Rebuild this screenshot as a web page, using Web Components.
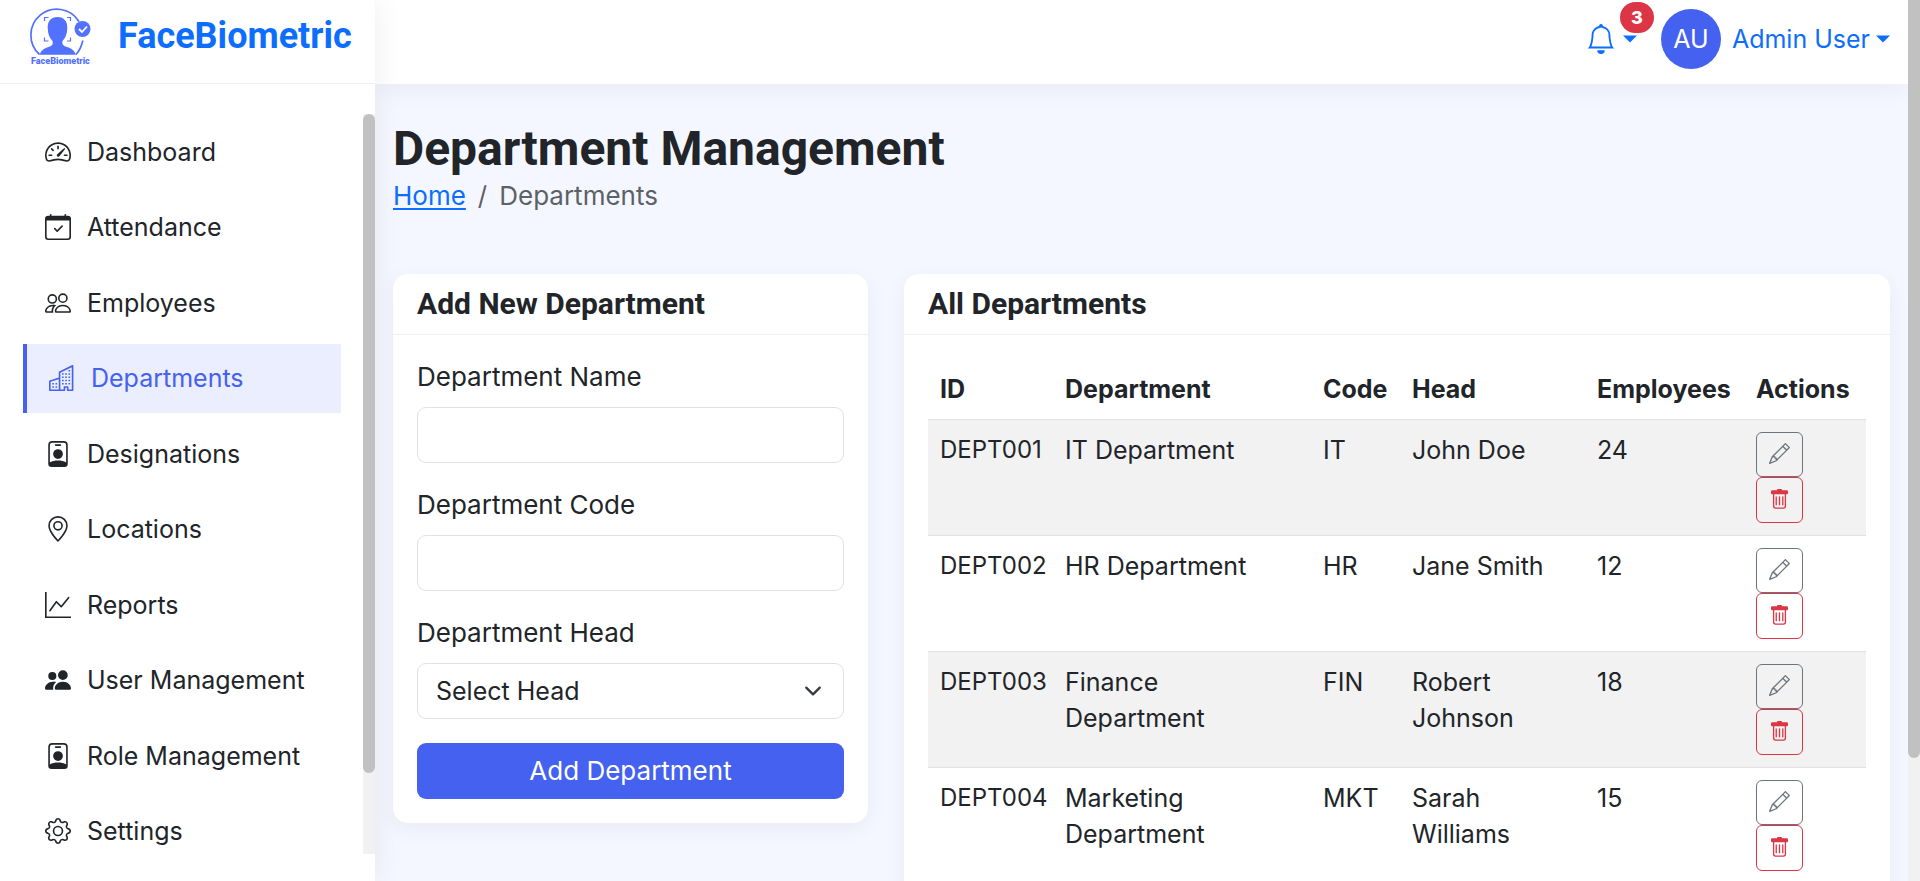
<!DOCTYPE html>
<html lang="en">
<head>
<meta charset="utf-8">
<meta name="viewport" content="width=device-width, initial-scale=1">
<title>FaceBiometric - Department Management</title>
<style>
  body {
    margin: 0;
    background: #f4f7ff;
    color: #212529;
    font: 400 25px/36px Inter, "Open Sans", sans-serif;
    --accent: #4461f0;
    --link: #0d6efd;
    --line: #f0f0f1;
    --heading: Roboto, "Open Sans", sans-serif;
  }
</style>
</head>
<body>
<fb-shell>
  <fb-sidebar slot="sidebar">
    <fb-nav-item icon="speedometer">Dashboard</fb-nav-item>
    <fb-nav-item icon="calendar">Attendance</fb-nav-item>
    <fb-nav-item icon="people">Employees</fb-nav-item>
    <fb-nav-item icon="buildings" active>Departments</fb-nav-item>
    <fb-nav-item icon="badge">Designations</fb-nav-item>
    <fb-nav-item icon="pin">Locations</fb-nav-item>
    <fb-nav-item icon="graph">Reports</fb-nav-item>
    <fb-nav-item icon="peopleFill">User Management</fb-nav-item>
    <fb-nav-item icon="badge">Role Management</fb-nav-item>
    <fb-nav-item icon="gear">Settings</fb-nav-item>
  </fb-sidebar>
  <fb-topbar slot="topbar"></fb-topbar>
  <fb-page-title current="Departments">Department Management</fb-page-title>
  <fb-columns>
    <fb-card heading="Add New Department"><fb-department-form></fb-department-form></fb-card>
    <fb-card heading="All Departments"><fb-department-table></fb-department-table></fb-card>
  </fb-columns>
</fb-shell>

<script>
const ICONS = {
  speedometer: '<path d="M8 4a.5.5 0 0 1 .5.5V6a.5.5 0 0 1-1 0V4.5A.5.5 0 0 1 8 4M3.732 5.732a.5.5 0 0 1 .707 0l.915.914a.5.5 0 1 1-.708.708l-.914-.915a.5.5 0 0 1 0-.707M2 10a.5.5 0 0 1 .5-.5h1.586a.5.5 0 0 1 0 1H2.5A.5.5 0 0 1 2 10m9.5 0a.5.5 0 0 1 .5-.5h1.5a.5.5 0 0 1 0 1H12a.5.5 0 0 1-.5-.5m.754-4.246a.39.39 0 0 0-.527-.02L7.547 9.31a.91.91 0 1 0 1.302 1.258l3.434-4.297a.39.39 0 0 0-.029-.518z"/><path fill-rule="evenodd" d="M0 10a8 8 0 1 1 15.547 2.661c-.442 1.253-1.845 1.602-2.932 1.25C11.309 13.488 9.475 13 8 13c-1.474 0-3.31.488-4.615.911-1.087.352-2.49.003-2.932-1.25A8 8 0 0 1 0 10m8-7a7 7 0 0 0-6.603 9.329c.203.575.923.876 1.68.63C4.397 12.533 6.358 12 8 12s3.604.532 4.923.96c.757.245 1.477-.056 1.68-.631A7 7 0 0 0 8 3"/>',
  calendar: '<path d="M10.854 7.146a.5.5 0 0 1 0 .708l-3 3a.5.5 0 0 1-.708 0l-1.5-1.5a.5.5 0 1 1 .708-.708L7.5 9.793l2.646-2.647a.5.5 0 0 1 .708 0"/><path d="M3.5 0a.5.5 0 0 1 .5.5V1h8V.5a.5.5 0 0 1 1 0V1h1a2 2 0 0 1 2 2v11a2 2 0 0 1-2 2H2a2 2 0 0 1-2-2V3a2 2 0 0 1 2-2h1V.5a.5.5 0 0 1 .5-.5M1 4v10a1 1 0 0 0 1 1h12a1 1 0 0 0 1-1V4z"/>',
  people: '<path d="M15 14s1 0 1-1-1-4-5-4-5 3-5 4 1 1 1 1zm-7.978-1L7 12.996c.001-.264.167-1.03.76-1.72C8.312 10.629 9.282 10 11 10c1.717 0 2.687.63 3.24 1.276.593.69.758 1.457.76 1.72l-.008.002-.014.002zM11 7a2 2 0 1 0 0-4 2 2 0 0 0 0 4m3-2a3 3 0 1 1-6 0 3 3 0 0 1 6 0M6.936 9.28a6 6 0 0 0-1.23-.247A7 7 0 0 0 5 9c-4 0-5 3-5 4q0 1 1 1h4.216A2.24 2.24 0 0 1 5 13c0-1.01.377-2.042 1.09-2.904.243-.294.526-.569.846-.816M4.92 10A5.5 5.5 0 0 0 4 13H1c0-.26.164-1.03.76-1.724.545-.636 1.492-1.256 3.16-1.275ZM1.5 5.5a3 3 0 1 1 6 0 3 3 0 0 1-6 0m3-2a2 2 0 1 0 0 4 2 2 0 0 0 0-4"/>',
  peopleFill: '<path d="M7 14s-1 0-1-1 1-4 5-4 5 3 5 4-1 1-1 1zm4-6a3 3 0 1 0 0-6 3 3 0 0 0 0 6m-5.784 6A2.24 2.24 0 0 1 5 13c0-1.355.68-2.75 1.936-3.72A6.3 6.3 0 0 0 5 9c-4 0-5 3-5 4s1 1 1 1zM4.5 8a2.5 2.5 0 1 0 0-5 2.5 2.5 0 0 0 0 5"/>',
  buildings: '<path d="M14.763.075A.5.5 0 0 1 15 .5v15a.5.5 0 0 1-.5.5h-3a.5.5 0 0 1-.5-.5V14h-1v1.5a.5.5 0 0 1-.5.5h-9a.5.5 0 0 1-.5-.5V10a.5.5 0 0 1 .342-.474L6 7.64V4.5a.5.5 0 0 1 .276-.447l8-4a.5.5 0 0 1 .487.022M6 8.694 1 10.36V15h5zM7 15h2v-1.5a.5.5 0 0 1 .5-.5h2a.5.5 0 0 1 .5.5V15h2V1.309l-7 3.5z"/><path d="M2 11h1v1H2zm2 0h1v1H4zm-2 2h1v1H2zm2 0h1v1H4zm4-4h1v1H8zm2 0h1v1h-1zm-2 2h1v1H8zm2 0h1v1h-1zm2-2h1v1h-1zm0 2h1v1h-1zM8 7h1v1H8zm2 0h1v1h-1zm2 0h1v1h-1zM8 5h1v1H8zm2 0h1v1h-1zm2 0h1v1h-1zm0-2h1v1h-1z"/>',
  badge: '<path d="M6.5 2a.5.5 0 0 0 0 1h3a.5.5 0 0 0 0-1zM11 8a3 3 0 1 1-6 0 3 3 0 0 1 6 0"/><path d="M4.5 0A2.5 2.5 0 0 0 2 2.5V14a2 2 0 0 0 2 2h8a2 2 0 0 0 2-2V2.5A2.5 2.5 0 0 0 11.5 0zM3 2.5A1.5 1.5 0 0 1 4.5 1h7A1.5 1.5 0 0 1 13 2.5v10.795a4.2 4.2 0 0 0-.776-.492C11.392 12.387 10.063 12 8 12s-3.392.387-4.224.803a4.2 4.2 0 0 0-.776.492z"/>',
  pin: '<path d="M12.166 8.94c-.524 1.062-1.234 2.12-1.96 3.07A32 32 0 0 1 8 14.58a32 32 0 0 1-2.206-2.57c-.726-.95-1.436-2.008-1.96-3.07C3.304 7.867 3 6.862 3 6a5 5 0 0 1 10 0c0 .862-.305 1.867-.834 2.94M8 16s6-5.686 6-10A6 6 0 0 0 2 6c0 4.314 6 10 6 10"/><path d="M8 8a2 2 0 1 1 0-4 2 2 0 0 1 0 4m0 1a3 3 0 1 0 0-6 3 3 0 0 0 0 6"/>',
  graph: '<path fill-rule="evenodd" d="M0 0h1v15h15v1H0zm14.817 3.113a.5.5 0 0 1 .07.704l-4.5 5.5a.5.5 0 0 1-.74.037L7.06 6.767l-3.656 5.027a.5.5 0 0 1-.808-.588l4-5.5a.5.5 0 0 1 .758-.06l2.609 2.61 4.15-5.073a.5.5 0 0 1 .704-.07"/>',
  gear: '<path d="M8 4.754a3.246 3.246 0 1 0 0 6.492 3.246 3.246 0 0 0 0-6.492M5.754 8a2.246 2.246 0 1 1 4.492 0 2.246 2.246 0 0 1-4.492 0"/><path d="M9.796 1.343c-.527-1.79-3.065-1.79-3.592 0l-.094.319a.873.873 0 0 1-1.255.52l-.292-.16c-1.64-.892-3.433.902-2.54 2.541l.159.292a.873.873 0 0 1-.52 1.255l-.319.094c-1.79.527-1.79 3.065 0 3.592l.319.094a.873.873 0 0 1 .52 1.255l-.16.292c-.892 1.64.901 3.434 2.541 2.54l.292-.159a.873.873 0 0 1 1.255.52l.094.319c.527 1.79 3.065 1.79 3.592 0l.094-.319a.873.873 0 0 1 1.255-.52l.292.16c1.64.893 3.434-.902 2.54-2.541l-.159-.292a.873.873 0 0 1 .52-1.255l.319-.094c1.79-.527 1.79-3.065 0-3.592l-.319-.094a.873.873 0 0 1-.52-1.255l.16-.292c.893-1.64-.902-3.433-2.541-2.54l-.292.159a.873.873 0 0 1-1.255-.52zm-2.633.283c.246-.835 1.428-.835 1.674 0l.094.319a1.873 1.873 0 0 0 2.693 1.115l.291-.16c.764-.415 1.6.42 1.184 1.185l-.159.292a1.873 1.873 0 0 0 1.116 2.692l.318.094c.835.246.835 1.428 0 1.674l-.319.094a1.873 1.873 0 0 0-1.115 2.693l.16.291c.415.764-.42 1.6-1.185 1.184l-.291-.159a1.873 1.873 0 0 0-2.693 1.116l-.094.318c-.246.835-1.428.835-1.674 0l-.094-.319a1.873 1.873 0 0 0-2.692-1.115l-.292.16c-.764.415-1.6-.42-1.184-1.185l.159-.291A1.873 1.873 0 0 0 1.945 8.93l-.319-.094c-.835-.246-.835-1.428 0-1.674l.319-.094A1.873 1.873 0 0 0 3.06 4.377l-.16-.292c-.415-.764.42-1.6 1.185-1.184l.292.159a1.873 1.873 0 0 0 2.692-1.115z"/>',
  bell: '<path d="M8 16a2 2 0 0 0 2-2H6a2 2 0 0 0 2 2M8 1.918l-.797.161A4 4 0 0 0 4 6c0 .628-.134 2.197-.459 3.742-.16.767-.376 1.566-.663 2.258h10.244c-.287-.692-.502-1.49-.663-2.258C12.134 8.197 12 6.628 12 6a4 4 0 0 0-3.203-3.92zM14.22 12c.223.447.481.801.78 1H1c.299-.199.557-.553.78-1C2.68 10.2 3 6.88 3 6c0-2.42 1.72-4.44 4.005-4.901a1 1 0 1 1 1.99 0A5 5 0 0 1 13 6c0 .88.32 4.2 1.22 6"/>',
  pencil: '<path d="M12.146.146a.5.5 0 0 1 .708 0l3 3a.5.5 0 0 1 0 .708l-10 10a.5.5 0 0 1-.168.11l-5 2a.5.5 0 0 1-.65-.65l2-5a.5.5 0 0 1 .11-.168zM11.207 2.5 13.5 4.793 14.793 3.5 12.5 1.207zm1.586 3L10.5 3.207 4 9.707V10h.5a.5.5 0 0 1 .5.5v.5h.5a.5.5 0 0 1 .5.5v.5h.293zm-9.761 5.175-.106.106-1.528 3.821 3.821-1.528.106-.106A.5.5 0 0 1 5 12.5V12h-.5a.5.5 0 0 1-.5-.5V11h-.5a.5.5 0 0 1-.468-.325"/>',
  trash: '<path d="M5.5 5.5A.5.5 0 0 1 6 6v6a.5.5 0 0 1-1 0V6a.5.5 0 0 1 .5-.5m2.5 0a.5.5 0 0 1 .5.5v6a.5.5 0 0 1-1 0V6a.5.5 0 0 1 .5-.5m3 .5a.5.5 0 0 0-1 0v6a.5.5 0 0 0 1 0z"/><path d="M14.5 3a1 1 0 0 1-1 1H13v9a2 2 0 0 1-2 2H5a2 2 0 0 1-2-2V4h-.5a1 1 0 0 1-1-1V2a1 1 0 0 1 1-1H6a1 1 0 0 1 1-1h2a1 1 0 0 1 1 1h3.5a1 1 0 0 1 1 1zM4.118 4 4 4.059V13a1 1 0 0 0 1 1h6a1 1 0 0 0 1-1V4.059L11.882 4z"/>',
  chevron: '<path d="m2 5 6 6 6-6" fill="none" stroke="#343a40" stroke-width="2" stroke-linecap="round" stroke-linejoin="round"/>',
  caret: '<path d="M0 4h16L8 12z"/>'
};

/* Registers an element whose shadow root is cloned from a template. */
function element(tag, markup, setup) {
  const template = document.createElement('template');
  template.innerHTML = '<style>*, *::before { box-sizing: border-box }</style>' + markup;
  customElements.define(tag, class extends HTMLElement {
    connectedCallback() {
      if (this.shadowRoot) return;
      const content = template.content.cloneNode(true);
      if (setup) setup(this, content);
      this.attachShadow({ mode: 'open' }).append(content);
    }
  });
}

element('fb-icon', `
  <style>
    :host { display: block; flex: none; width: 26px; height: 26px; }
    svg { display: block; width: 100%; height: 100%; fill: currentColor; }
  </style>
  <svg viewBox="0 0 16 16" aria-hidden="true"></svg>`,
  (host, root) => { root.querySelector('svg').innerHTML = ICONS[host.getAttribute('name')]; });

element('fb-scroll-track', `
  <style>
    :host { display: block; width: 12px; background: #f1f1f1; }
    div { height: var(--thumb, 86%); background: #c1c1c1; border-radius: var(--thumb-radius, 6px); }
  </style>
  <div></div>`);

element('fb-shell', `
  <style>
    :host { display: grid; grid-template: minmax(0, 1fr) / 375px minmax(0, 1fr) 12px; height: 100vh; overflow: hidden; }
    .content { display: flex; flex-direction: column; min-width: 0; overflow: hidden; }
    main { flex: none; padding: 36px 18px; }
    fb-scroll-track { --thumb-radius: 0 0 6px 6px; z-index: 3; }
  </style>
  <slot name="sidebar"></slot>
  <div class="content">
    <slot name="topbar"></slot>
    <main><slot></slot></main>
  </div>
  <fb-scroll-track></fb-scroll-track>`);

element('fb-logo', `
  <style>
    :host { display: block; flex: none; width: 64px; height: 60px; }
    svg { display: block; width: 100%; height: 100%; }
    text { font: 900 9px Roboto, sans-serif; }
  </style>
  <svg viewBox="0 0 64 60" fill="#5271ff" role="img" aria-label="FaceBiometric logo">
    <path d="M11.500 48.500A26 26 0 1 1 51 15.500M54.800 34.500Q53 43 48 48.500" fill="none" stroke="#5271ff" stroke-width="1.700"/>
    <path d="M16.500 15v-3.500h4M39 11.500h3.500V15M16.500 31.500V35h4M39 35h3.500v-3.500" fill="none" stroke="#5271ff" stroke-width="1.200"/>
    <path d="M29.500 11C36 11 39.500 15 39.300 22C39.100 28 37.500 32 34.500 35C33.800 38.500 35.500 40 39 41C43.500 42.500 46 44 48 48.800H11.500C13.500 44 16 42.500 20.500 41C24 40 25.200 38.500 24.500 35C21.500 32 19.900 28 19.700 22C19.500 15 23 11 29.500 11Z"/>
    <circle cx="54.500" cy="23" r="8"/>
    <path d="m51 23 3 3 5-5.500" fill="none" stroke="#fff" stroke-width="1.800"/>
    <text x="3" y="58">FaceBiometric</text>
  </svg>`);

element('fb-sidebar', `
  <style>
    :host { display: flex; flex-direction: column; position: relative; z-index: 2; background: #fff; box-shadow: 0 0 30px rgba(0, 0, 0, .07); }
    .brand { display: flex; flex: none; align-items: center; gap: 26px; height: 84px; padding: 0 28px 12px; border-bottom: 1px solid var(--line);
      color: var(--link); font: 700 36px/44px var(--heading); text-decoration: none; }
    .scroller { display: flex; flex: 1; min-height: 0; margin: 30px 0 27px; overflow: hidden; }
    nav { flex: 1; display: grid; grid-template-rows: repeat(10, 1fr); gap: 6px; height: 749px; padding: 0 22px 0 23px; margin-top: 3px; }
    fb-scroll-track { --thumb: 89%; }
  </style>
  <a class="brand" href="#"><fb-logo></fb-logo><span>FaceBiometric</span></a>
  <div class="scroller">
    <nav aria-label="Main"><slot></slot></nav>
    <fb-scroll-track></fb-scroll-track>
  </div>`);

element('fb-nav-item', `
  <style>
    :host { display: grid; }
    a { display: flex; align-items: center; gap: 16px; padding: 0 22px; color: inherit; text-decoration: none; }
    :host([active]) a { border-left: 4px solid var(--accent); background: #ebeefe; color: var(--accent); }
  </style>
  <a href="#"><fb-icon></fb-icon><span><slot></slot></span></a>`,
  (host, root) => {
    root.querySelector('fb-icon').setAttribute('name', host.getAttribute('icon'));
    if (host.hasAttribute('active')) root.querySelector('a').setAttribute('aria-current', 'page');
  });

element('fb-topbar', `
  <style>
    :host { display: block; flex: none; position: relative; z-index: 1; background: #fff; box-shadow: 0 0 30px rgba(0, 0, 0, .07); }
    header { display: flex; justify-content: flex-end; align-items: center; gap: 24px; height: 84px; padding: 0 18px 7px; }
    button { display: flex; align-items: center; padding: 0; border: 0; background: none; color: var(--link); font: inherit; }
    .alerts { position: relative; gap: 7px; }
    .alerts fb-icon:first-child { width: 30px; height: 30px; }
    fb-icon.caret { width: 14px; height: 14px; }
    .count { position: absolute; left: 34px; top: -22px; padding: 0 11px; border-radius: 16px; background: #dc3545; color: #fff; font-size: 18px; font-weight: 800; line-height: 31px; }
    .user { gap: 6px; }
    .avatar { display: grid; place-items: center; width: 60px; height: 60px; margin-right: 5px; border-radius: 50%; background: var(--accent); color: #fff; }
  </style>
  <header>
    <button class="alerts" type="button" aria-label="3 notifications">
      <fb-icon name="bell"></fb-icon><fb-icon class="caret" name="caret"></fb-icon>
      <span class="count">3</span>
    </button>
    <button class="user" type="button">
      <span class="avatar">AU</span><span>Admin User</span><fb-icon class="caret" name="caret"></fb-icon>
    </button>
  </header>`);

element('fb-page-title', `
  <style>
    :host { display: block; margin-bottom: 60px; }
    h1 { margin: 0; font: 700 48px/58px var(--heading); }
    nav { display: flex; gap: 12px; color: #5c6166; font-size: 26px; }
    a { color: var(--link); text-underline-offset: 3px; text-decoration-thickness: 2px; }
  </style>
  <h1><slot></slot></h1>
  <nav aria-label="Breadcrumb"><a href="#">Home</a><span>/</span><span class="current" aria-current="page"></span></nav>`,
  (host, root) => { root.querySelector('.current').textContent = host.getAttribute('current'); });

element('fb-columns', `
  <style>
    :host { display: grid; grid-template-columns: minmax(0, 475fr) minmax(0, 986fr); align-items: start; gap: 36px; }
  </style>
  <slot></slot>`);

element('fb-card', `
  <style>
    :host { display: block; border-radius: 15px; background: #fff; box-shadow: 0 6px 22px rgba(0, 0, 0, .05); }
    h2 { margin: 0; padding: 12px 24px; border-bottom: 1px solid var(--line); font: 700 30px/36px var(--heading); }
    .body { padding: 24px; }
  </style>
  <h2></h2>
  <div class="body"><slot></slot></div>`,
  (host, root) => { root.querySelector('h2').textContent = host.getAttribute('heading'); });

element('fb-department-form', `
  <style>
    :host { display: block; }
    form { display: grid; gap: 24px; }
    .field { display: grid; gap: 12px; }
    label { font-size: 26px; }
    input, select, button { width: 100%; height: 56px; margin: 0; border-radius: 9px; font: inherit; }
    input, select { padding: 0 18px; border: 1px solid #dee2e6; background: #fff; color: inherit; }
    select { appearance: none; grid-area: 1 / 1; }
    .select { display: grid; align-items: center; }
    .select fb-icon { grid-area: 1 / 1; justify-self: end; width: 18px; height: 18px; margin-right: 22px; pointer-events: none; }
    button { padding: 0; border: 0; background: var(--accent); color: #fff; font-size: 26px; }
  </style>
  <form>
    <div class="field"><label for="name">Department Name</label><input id="name" type="text"></div>
    <div class="field"><label for="code">Department Code</label><input id="code" type="text"></div>
    <div class="field"><label for="head">Department Head</label>
      <div class="select">
        <select id="head"><option>Select Head</option><option>John Doe</option><option>Jane Smith</option></select>
        <fb-icon name="chevron"></fb-icon>
      </div>
    </div>
    <button type="button">Add Department</button>
  </form>`);

const DEPARTMENTS = [
  ['DEPT001', 'IT Department', 'IT', 'John Doe', 24],
  ['DEPT002', 'HR Department', 'HR', 'Jane Smith', 12],
  ['DEPT003', 'Finance Department', 'FIN', 'Robert Johnson', 18],
  ['DEPT004', 'Marketing Department', 'MKT', 'Sarah Williams', 15]
];

element('fb-department-table', `
  <style>
    :host { display: block; }
    table { width: 100%; border-collapse: separate; border-spacing: 0; table-layout: fixed; }
    th, td { padding: 12px; border-bottom: 1px solid #dee2e6; text-align: left; vertical-align: top; }
    th { font-weight: 700; }
    td:first-child { font-size: 24px; white-space: nowrap; }
    tbody tr:nth-child(odd) { background: #f2f2f2; }
    .actions { display: grid; grid-template-rows: 45px 46px; width: 47px; }
    button { display: grid; place-items: center; padding: 0 0 2px; border: 1px solid; border-radius: 6px; background: none; color: #6c757d; }
    button fb-icon { width: 21px; height: 21px; }
    button.delete { color: #dc3545; }
  </style>
  <table>
    <colgroup><col style="width:125px"><col style="width:258px"><col style="width:89px"><col style="width:185px"><col style="width:159px"><col style="width:122px"></colgroup>
    <thead><tr><th>ID</th><th>Department</th><th>Code</th><th>Head</th><th>Employees</th><th>Actions</th></tr></thead>
    <tbody></tbody>
  </table>`,
  (host, root) => {
    root.querySelector('tbody').innerHTML = DEPARTMENTS.map(row =>
      '<tr>' + row.map(value => `<td>${value}</td>`).join('') +
      `<td><div class="actions">
        <button type="button" aria-label="Edit ${row[1]}"><fb-icon name="pencil"></fb-icon></button>
        <button class="delete" type="button" aria-label="Delete ${row[1]}"><fb-icon name="trash"></fb-icon></button>
      </div></td></tr>`).join('');
  });
</script>
</body>
</html>
